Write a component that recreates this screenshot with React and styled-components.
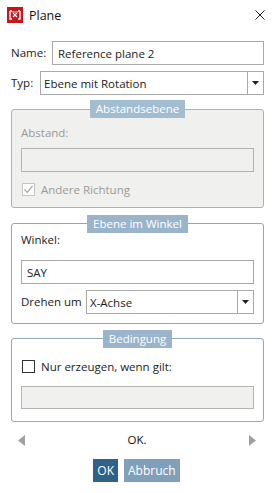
import React from "react";
import styled, { createGlobalStyle } from "styled-components";

const Global = createGlobalStyle`
  html, body { margin: 0; padding: 0; background: #ffffff; }
  body { font-family: "Open Sans", "Noto Sans", sans-serif; font-size: 11.5px; color: #1b1b1b; }
  * { box-sizing: border-box; }
`;

const Window = styled.div`
  width: 275px;
  height: 493px;
  background: #fff;
  display: flex;
  flex-direction: column;
`;

const TitleBar = styled.div`
  height: 30px;
  display: flex;
  align-items: center;
  padding: 0 10px 0 7px;
  gap: 6px;
  font-size: 12.5px;
  color: #111;
`;

const TitleText = styled.span`
  flex: 1;
`;

const Body = styled.div`
  display: flex;
  flex-direction: column;
  padding: 11px 11px 0 11px;
`;

const Row = styled.div`
  display: flex;
  align-items: center;
  margin-top: ${(p) => p.$mt || 0}px;
`;

const Label = styled.span`
  width: ${(p) => (p.$w ? `${p.$w}px` : "auto")};
  flex: none;
  line-height: 16px;
  color: ${(p) => (p.$disabled ? "#9a9a9a" : "#1b1b1b")};
  margin-top: ${(p) => p.$mt || 0}px;
`;

const TextBox = styled.div`
  flex: 1;
  height: ${(p) => p.$h || 24}px;
  border: 1px solid ${(p) => (p.$disabled ? "#b4b4b4" : "#a9a9a9")};
  background: ${(p) => (p.$disabled ? "#f0f0ee" : "#fff")};
  display: flex;
  align-items: center;
  padding: 0 5px;
  color: #1b1b1b;
`;

const Select = styled.div`
  flex: 1;
  height: ${(p) => p.$h || 24}px;
  border: 1px solid #a9a9a9;
  background: #fff;
  display: flex;
  align-items: stretch;
`;

const SelectValue = styled.div`
  flex: 1;
  display: flex;
  align-items: center;
  padding: 0 3px;
`;

const SelectButton = styled.div`
  width: 16px;
  border-left: 1px solid #a9a9a9;
  display: flex;
  align-items: center;
  justify-content: center;
`;

const Group = styled.div`
  display: flex;
  flex-direction: column;
  border: 1px solid ${(p) => (p.$disabled ? "#b0b0b0" : "#8ea9be")};
  border-radius: 3px;
  background: ${(p) => (p.$disabled ? "#f0f0ee" : "#fff")};
  padding: 0 9px ${(p) => p.$pb || 10}px 9px;
  margin-top: ${(p) => p.$mt || 0}px;
`;

const Legend = styled.div`
  align-self: center;
  height: 18px;
  margin-top: -${(p) => p.$up || 9}px;
  padding: 0 6px;
  background: ${(p) => (p.$disabled ? "#a2bcd0" : "#9ab5cb")};
  color: #fff;
  line-height: 18px;
  font-size: 11.5px;
`;

const CheckRow = styled.div`
  display: flex;
  align-items: center;
  gap: 6px;
  height: 13px;
  margin-top: ${(p) => p.$mt || 0}px;
  padding-left: 1px;
  color: ${(p) => (p.$disabled ? "#9a9a9a" : "#1b1b1b")};
  line-height: 16px;
`;

const CheckBox = styled.div`
  width: 13px;
  height: 13px;
  flex: none;
  border: 1px solid ${(p) => (p.$disabled ? "#c4c4c4" : "#333")};
  background: #fff;
  display: flex;
  align-items: center;
  justify-content: center;
`;

const NavRow = styled.div`
  display: flex;
  align-items: center;
  justify-content: space-between;
  height: 16px;
  margin-top: 10px;
  padding: 0 19px 0 18px;
`;

const NavText = styled.span`
  color: #111;
  line-height: 16px;
`;

const Buttons = styled.div`
  display: flex;
  justify-content: center;
  gap: 6px;
  margin-top: 11px;
  padding-right: 2px;
`;

const Button = styled.div`
  height: 23px;
  padding: 0 ${(p) => p.$px || 4}px;
  background: ${(p) => (p.$primary ? "#2f6286" : "#7fa0b8")};
  color: #fff;
  display: flex;
  align-items: center;
  font-size: 12px;
`;

const Arrow = () => (
  <svg width="7" height="4" viewBox="0 0 7 4">
    <path d="M0 0H7L3.5 4Z" fill="#222" />
  </svg>
);

const AppIcon = () => (
  <svg width="16" height="16" viewBox="0 0 16 16">
    <rect width="16" height="16" fill="#c4161c" />
    <path d="M3 4H5M3 4V12H5M13 4H11M13 4V12H11" stroke="#fff" strokeWidth="1.4" fill="none" />
    <path d="M6 6L10 10M10 6L6 10" stroke="#fff" strokeWidth="1.2" />
    <path d="M5 5H11" stroke="#f4c0c0" strokeWidth="1" />
  </svg>
);

const CloseIcon = () => (
  <svg width="10" height="10" viewBox="0 0 10 10">
    <path d="M0.5 0.5L9.5 9.5M9.5 0.5L0.5 9.5" stroke="#222" strokeWidth="1" />
  </svg>
);

const Tri = ({ dir }) => (
  <svg width="7" height="11" viewBox="0 0 7 11">
    <path d={dir === "left" ? "M7 0V11L0 5.5Z" : "M0 0V11L7 5.5Z"} fill="#a0a0a0" />
  </svg>
);

const Check = () => (
  <svg width="11" height="11" viewBox="0 0 11 11">
    <path d="M1.5 5.5L4.3 8.3L9.5 2" stroke="#a8a8a8" strokeWidth="1.2" fill="none" />
  </svg>
);

export default function App() {
  return (
    <Window>
      <Global />
      <TitleBar>
        <AppIcon />
        <TitleText>Plane</TitleText>
        <CloseIcon />
      </TitleBar>
      <Body>
        <Row>
          <Label $w={41}>Name:</Label>
          <TextBox>Reference plane 2</TextBox>
        </Row>
        <Row $mt={6}>
          <Label $w={29}>Typ:</Label>
          <Select>
            <SelectValue>Ebene mit Rotation</SelectValue>
            <SelectButton><Arrow /></SelectButton>
          </Select>
        </Row>

        <Group $disabled $mt={14} $pb={11}>
          <Legend $disabled $up={10}>Abstandsebene</Legend>
          <Label $disabled $mt={7}>Abstand:</Label>
          <Row $mt={7}>
            <TextBox $disabled />
          </Row>
          <CheckRow $disabled $mt={11}>
            <CheckBox $disabled><Check /></CheckBox>
            Andere Richtung
          </CheckRow>
        </Group>

        <Group $mt={15} $pb={9}>
          <Legend>Ebene im Winkel</Legend>
          <Label $mt={-1}>Winkel:</Label>
          <Row $mt={12}>
            <TextBox>SAY</TextBox>
          </Row>
          <Row $mt={6}>
            <Label $w={65}>Drehen um</Label>
            <Select>
              <SelectValue>X-Achse</SelectValue>
              <SelectButton><Arrow /></SelectButton>
            </Select>
          </Row>
        </Group>

        <Group $mt={14} $pb={12}>
          <Legend>Bedingung</Legend>
          <CheckRow $mt={12}>
            <CheckBox />
            Nur erzeugen, wenn gilt:
          </CheckRow>
          <Row $mt={13}>
            <TextBox $disabled $h={23} />
          </Row>
        </Group>
      </Body>
      <NavRow>
        <Tri dir="left" />
        <NavText>OK.</NavText>
        <Tri dir="right" />
      </NavRow>
      <Buttons>
        <Button $primary>OK</Button>
        <Button>Abbruch</Button>
      </Buttons>
    </Window>
  );
}
